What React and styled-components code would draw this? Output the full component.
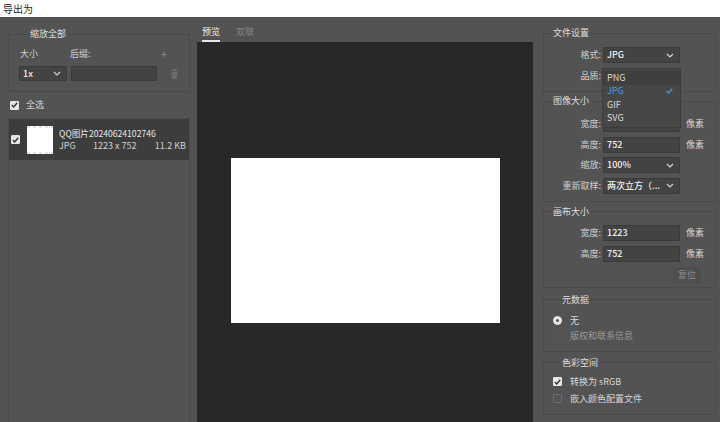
import React from 'react';
import styled, { createGlobalStyle } from 'styled-components';

const GlobalStyle = createGlobalStyle`
  html, body {
    margin: 0;
    padding: 0;
    background: #535353;
  }
  body {
    font-family: "Noto Sans CJK SC", "Liberation Sans", sans-serif;
  }`;

const Window = styled.div`
  display: flex;
  flex-direction: column;
  width: 720px;
  height: 422px;
  overflow: hidden;
  background: #535353;
  color: #d2d2d2;
  font-size: 9px;
  line-height: 12px;`;

const TitleBar = styled.div`
  flex: none;
  display: flex;
  align-items: center;
  height: 17px;
  padding-left: 3px;
  background: #ffffff;
  color: #2a2a2a;
  font-size: 10px;`;

const Body = styled.div`
  flex: 1;
  display: flex;
  min-height: 0;`;

/* ---------- left column ---------- */

const LeftPanel = styled.div`
  flex: none;
  display: flex;
  flex-direction: column;
  width: 197px;
  box-sizing: border-box;
  padding: 11px 7px 0 8px;`;

const Group = styled.fieldset`
  min-width: 0;
  margin: ${ (p) => p.$mt || 0 }px 0 0;
  padding: ${ (p) => p.$pad };
  border: 1px solid #4a4a4a;
  display: flex;
  flex-direction: column;
  gap: ${ (p) => p.$gap || 5 }px;`;

const Legend = styled.legend`
  margin-left: ${ (p) => p.$indent }px;
  padding: 0 1px;
  color: #dedede;
  font-size: 9px;
  line-height: 12px;`;

const ScaleHead = styled.div`
  display: grid;
  grid-template-columns: 50px 1fr auto;
  padding: 0 12px 0 1px;
  color: #cfcfcf;`;

const AddSign = styled.span`
  color: #8e8e8e;
  font-size: 11px;`;

const ScaleRow = styled.div`
  display: flex;
  align-items: center;
  gap: 4px;`;

const SelectBox = styled.div`
  position: relative;
  display: flex;
  align-items: center;
  justify-content: space-between;
  width: ${ (p) => p.$w }px;
  height: ${ (p) => p.$h || 16 }px;
  box-sizing: border-box;
  padding: 0 5px 0 3px;
  background: #434343;
  border: 1px solid #3a3a3a;
  color: #f0f0f0;
  font-weight: 500;`;

const TrashIcon = styled.svg`
  margin-left: 9px;`;

const CheckRow = styled.label`
  display: flex;
  align-items: center;
  gap: ${ (p) => p.$gap || 7 }px;
  margin-top: ${ (p) => p.$mt || 0 }px;
  padding-left: ${ (p) => p.$pl || 0 }px;
  height: 12px;
  color: ${ (p) => (p.$dim ? '#9a9a9a' : '#d6d6d6') };`;

const Box = styled.span`
  flex: none;
  display: flex;
  align-items: center;
  justify-content: center;
  width: 9px;
  height: 9px;
  border-radius: 1px;
  box-sizing: border-box;
  background: ${ (p) => (p.$checked ? '#e6e6e6' : 'transparent') };
  border: 1px solid ${ (p) => (p.$checked ? '#e6e6e6' : '#6c6c6c') };`;

const Radio = styled.span`
  flex: none;
  display: flex;
  align-items: center;
  justify-content: center;
  width: 9px;
  height: 9px;
  border-radius: 50%;
  box-sizing: border-box;
  background: ${ (p) => (p.$checked ? '#e6e6e6' : 'transparent') };
  border: 1px solid ${ (p) => (p.$checked ? '#e6e6e6' : '#5c5c5c') };
  &::after {
    content: '';
    display: ${ (p) => (p.$checked ? 'block' : 'none') };
    width: 3px;
    height: 3px;
    border-radius: 50%;
    background: #555555;
  }`;

const AssetList = styled.div`
  flex: 1;
  margin-top: 7px;
  border: 1px solid #4a4a4a;
  border-bottom: none;`;

const AssetRow = styled.div`
  display: flex;
  align-items: center;
  height: 41px;
  padding-left: 2px;
  background: #3d3d3d;`;

const Thumb = styled.div`
  flex: none;
  width: 26px;
  height: 28px;
  margin-left: 7px;
  background:
    repeating-linear-gradient(90deg, #e4e4e4 0 3px, #ffffff 3px 6px) top / 100% 2px no-repeat,
    repeating-linear-gradient(90deg, #e4e4e4 0 3px, #ffffff 3px 6px) bottom / 100% 2px no-repeat,
    #ffffff;`;

const AssetInfo = styled.div`
  flex: 1;
  display: flex;
  flex-direction: column;
  gap: 1px;
  margin-left: 6px;
  padding-right: 3px;`;

const AssetName = styled.div`
  color: #e6e6e6;
  font-size: 8.6px;`;

const AssetMeta = styled.div`
  display: grid;
  grid-template-columns: 34px 1fr auto;
  color: #d0d0d0;`;

/* ---------- centre ---------- */

const Center = styled.div`
  flex: none;
  display: flex;
  flex-direction: column;
  width: 336px;`;

const Tabs = styled.div`
  flex: none;
  display: flex;
  gap: 16px;
  height: 25px;
  box-sizing: border-box;
  padding: 9px 0 0 5px;`;

const Tab = styled.div`
  display: flex;
  flex-direction: column;
  gap: 2px;
  color: ${ (p) => (p.$active ? '#f2f2f2' : '#858585') };
  &::after {
    content: '';
    height: 2px;
    background: ${ (p) => (p.$active ? '#e8e8e8' : 'transparent') };
  }`;

const Preview = styled.div`
  flex: 1;
  display: flex;
  align-items: center;
  justify-content: center;
  padding-top: 17px;
  background: #282828;`;

const Artboard = styled.div`
  width: 269px;
  height: 165px;
  background: #ffffff;`;

/* ---------- right column ---------- */

const RightPanel = styled.div`
  flex: 1;
  display: flex;
  flex-direction: column;
  box-sizing: border-box;
  padding: 10px 4px 0 10px;`;

const FieldRow = styled.div`
  display: grid;
  grid-template-columns: 57px 77px auto;
  column-gap: 2px;
  align-items: center;
  height: 16px;`;

const FieldLabel = styled.span`
  text-align: right;
  color: #cfcfcf;`;

const Unit = styled.span`
  margin-left: 4px;
  color: #d6d6d6;`;

const ButtonRow = styled.div`
  display: flex;
  justify-content: flex-end;
  padding-right: 14px;`;

const GhostButton = styled.div`
  display: flex;
  align-items: center;
  justify-content: center;
  width: 28px;
  height: 16px;
  background: #4e4e4e;
  color: #8a8a8a;`;

const Menu = styled.div`
  position: absolute;
  top: -1px;
  left: -2px;
  z-index: 2;
  width: 79px;
  height: 60px;
  box-sizing: border-box;
  padding-top: 2px;
  background: #474747;
  border: 1px solid #3c3c3c;
  font-weight: 400;`;

const MenuItem = styled.div`
  display: flex;
  align-items: center;
  justify-content: space-between;
  height: 13.5px;
  padding: 0 7px 0 4px;
  background: ${ (p) => (p.$hover ? '#3f3f3f' : 'transparent') };
  color: ${ (p) => (p.$selected ? '#4f97e6' : '#dadada') };`;

const Chevron = () => (
  <svg width="8" height="5" viewBox="0 0 8 5">
    <polyline points="1,1 4,4 7,1" fill="none" stroke="#d6d6d6" strokeWidth="1.2" />
  </svg>
);

const Tick = ({ color = '#333333' }) => (
  <svg width="7" height="6" viewBox="0 0 7 6">
    <polyline points="0.8,3 2.7,5 6.2,0.8" fill="none" stroke={ color } strokeWidth="1.4" />
  </svg>
);

const Select = ({ w, h, value, children }) => (
  <SelectBox $w={ w } $h={ h }>
    <span>{ value }</span>
    <Chevron />
    { children }
  </SelectBox>
);

const Check = ({ checked }) => (
  <Box $checked={ checked }>{ checked && <Tick /> }</Box>
);

const Field = ({ label, children, unit }) => (
  <FieldRow>
    <FieldLabel>{ label }</FieldLabel>
    { children }
    { unit && <Unit>{ unit }</Unit> }
  </FieldRow>
);

const formats = ['PNG', 'JPG', 'GIF', 'SVG'];

const App = function () {
  return (
    <Window>
      <GlobalStyle />
      <TitleBar>导出为</TitleBar>
      <Body>
        <LeftPanel>
          <Group $pad="8px 10px 10px 10px" $gap={ 6 }>
            <Legend $indent={ 10 }>缩放全部</Legend>
            <ScaleHead>
              <span>大小</span>
              <span>后缀:</span>
              <AddSign>+</AddSign>
            </ScaleHead>
            <ScaleRow>
              <Select w={ 48 } h={ 15 } value="1x" />
              <SelectBox $w={ 86 } $h={ 15 } />
              <TrashIcon width="9" height="10" viewBox="0 0 9 10">
                <rect x="0.5" y="1" width="8" height="1.2" fill="#6a6a6a" />
                <rect x="3" y="0" width="3" height="1.2" fill="#6a6a6a" />
                <path d="M1.5 3 H7.5 L7 10 H2 Z" fill="#6a6a6a" />
              </TrashIcon>
            </ScaleRow>
          </Group>

          <CheckRow $mt={ 7 } $pl={ 2 }>
            <Check checked />
            全选
          </CheckRow>

          <AssetList>
            <AssetRow>
              <Check checked />
              <Thumb />
              <AssetInfo>
                <AssetName>QQ图片20240624102746</AssetName>
                <AssetMeta>
                  <span>JPG</span>
                  <span>1223 x 752</span>
                  <span>11.2 KB</span>
                </AssetMeta>
              </AssetInfo>
            </AssetRow>
          </AssetList>
        </LeftPanel>

        <Center>
          <Tabs>
            <Tab $active>预览</Tab>
            <Tab>双联</Tab>
          </Tabs>
          <Preview>
            <Artboard />
          </Preview>
        </Center>

        <RightPanel>
          <Group $pad="8px 0 7px 0">
            <Legend $indent={ 8 }>文件设置</Legend>
            <Field label="格式:">
              <Select w={ 77 } value="JPG" />
            </Field>
            <Field label="品质:">
              <Select w={ 77 } value="">
                <Menu>
                  { formats.map((f) => (
                    <MenuItem key={ f } $hover={ f === 'PNG' } $selected={ f === 'JPG' }>
                      { f }
                      { f === 'JPG' && <Tick color="#4f97e6" /> }
                    </MenuItem>
                  )) }
                </Menu>
              </Select>
            </Field>
          </Group>

          <Group $mt={ 3 } $pad="9px 0 7px 0" $gap={ 4.67 }>
            <Legend $indent={ 8 }>图像大小</Legend>
            <Field label="宽度:" unit="像素">
              <SelectBox $w={ 77 }>1223</SelectBox>
            </Field>
            <Field label="高度:" unit="像素">
              <SelectBox $w={ 77 }>752</SelectBox>
            </Field>
            <Field label="缩放:">
              <Select w={ 77 } value="100%" />
            </Field>
            <Field label="重新取样:">
              <Select w={ 77 } value="两次立方（..." />
            </Field>
          </Group>

          <Group $mt={ 4 } $pad="7px 0 4px 0">
            <Legend $indent={ 8 }>画布大小</Legend>
            <Field label="宽度:" unit="像素">
              <SelectBox $w={ 77 }>1223</SelectBox>
            </Field>
            <Field label="高度:" unit="像素">
              <SelectBox $w={ 77 }>752</SelectBox>
            </Field>
            <ButtonRow>
              <GhostButton>复位</GhostButton>
            </ButtonRow>
          </Group>

          <Group $mt={ 6 } $pad="9px 0 9px 9px" $gap={ 3 }>
            <Legend $indent={ 8 }>元数据</Legend>
            <CheckRow $gap={ 8 }>
              <Radio $checked />
              无
            </CheckRow>
            <CheckRow $gap={ 8 } $dim>
              <Radio />
              版权和联系信息
            </CheckRow>
          </Group>

          <Group $mt={ 5 } $pad="7px 0 9px 9px">
            <Legend $indent={ 8 }>色彩空间</Legend>
            <CheckRow $gap={ 8 }>
              <Check checked />
              转换为 sRGB
            </CheckRow>
            <CheckRow $gap={ 8 }>
              <Check />
              嵌入颜色配置文件
            </CheckRow>
          </Group>
        </RightPanel>
      </Body>
    </Window>
  );
};

export default App;
